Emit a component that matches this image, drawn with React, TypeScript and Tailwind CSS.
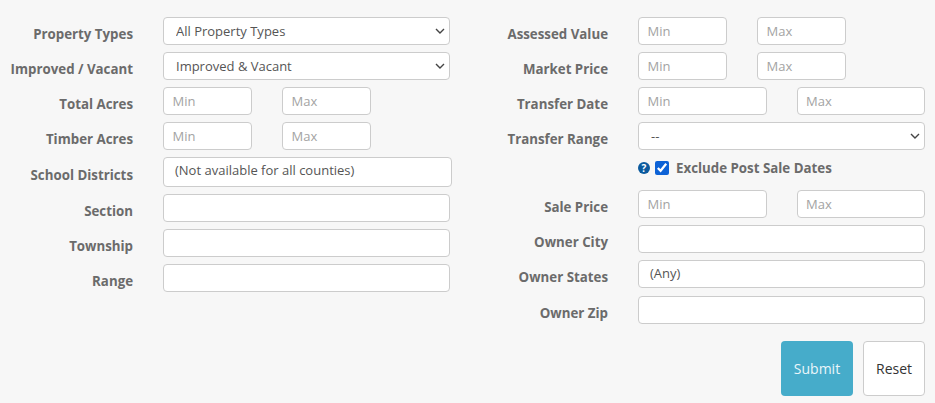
import React from "react";

const input = "h-7 rounded-[4px] border border-[#ccc] bg-white pl-[8.5px] pr-2 pb-[1px] text-[13px] text-[#555] placeholder:text-[#a3a3a3] outline-none";
const label = "font-bold text-[13.3px] text-[#6b6b6b] text-right";

function Row({ name, w, mt, children }: { name: string; w: string; mt?: string; children: React.ReactNode }) {
  return (
    <div className={`flex items-center ${mt ?? ""}`}>
      <div className={`${label} ${w} shrink-0 pt-[8px]`}>{name}</div>
      {children}
    </div>
  );
}

function Sel({ value }: { value: string }) {
  return (
    <div className="relative w-[287px] h-7">
      <select defaultValue={value} className="appearance-none h-7 w-full rounded-[4px] border border-[#ccc] bg-white pl-[12px] pt-[1px] text-[13px] text-[#555] outline-none">
        <option value={value}>{value}</option>
      </select>
      <svg className="absolute right-[5px] top-[11px] pointer-events-none" width="10" height="6" viewBox="0 0 10 6" fill="none" stroke="#444" strokeWidth="1.4"><path d="M1 1l4 4 4-4" /></svg>
    </div>
  );
}

function MinMax({ w, gap }: { w: string; gap: string }) {
  return (
    <div className={`flex ${gap}`}>
      <input className={`${input} ${w}`} placeholder="Min" readOnly />
      <input className={`${input} ${w}`} placeholder="Max" readOnly />
    </div>
  );
}

export default function App() {
  return (
    <div className="w-[935px] h-[403px] overflow-hidden bg-[#f7f7f7] flex font-['Open_Sans',sans-serif]">
      <div className="w-[470px] shrink-0 pt-[17px] flex flex-col gap-[7px]">
        <Row name="Property Types" w="w-[133px] mr-[30px]"><Sel value="All Property Types" /></Row>
        <Row name="Improved / Vacant" w="w-[133px] mr-[30px]"><Sel value="Improved & Vacant" /></Row>
        <Row name="Total Acres" w="w-[133px] mr-[30px]"><MinMax w="w-[89px]" gap="gap-[30px]" /></Row>
        <Row name="Timber Acres" w="w-[133px] mr-[30px]"><MinMax w="w-[89px]" gap="gap-[30px]" /></Row>
        <Row name="School Districts" w="w-[133px] mr-[30px]"><div className={`${input} w-[289px] h-[30px] flex items-center pl-[11px] pb-[3px] text-[#333]`}>(Not available for all counties)</div></Row>
        <Row name="Section" w="w-[133px] mr-[30px]"><input className={`${input} w-[287px]`} readOnly /></Row>
        <Row name="Township" w="w-[133px] mr-[30px]"><input className={`${input} w-[287px]`} readOnly /></Row>
        <Row name="Range" w="w-[133px] mr-[30px]"><input className={`${input} w-[287px]`} readOnly /></Row>
      </div>
      <div className="flex-1 pt-[17px] flex flex-col gap-[7px]">
        <Row name="Assessed Value" w="w-[138px] mr-[30px]"><MinMax w="w-[89px]" gap="gap-[30px]" /></Row>
        <Row name="Market Price" w="w-[138px] mr-[30px]"><MinMax w="w-[89px]" gap="gap-[30px]" /></Row>
        <Row name="Transfer Date" w="w-[138px] mr-[30px]"><MinMax w="w-[128.5px]" gap="gap-[30px]" /></Row>
        <Row name="Transfer Range" w="w-[138px] mr-[30px]"><Sel value="--" /></Row>
        <div className="flex items-start h-[26px] pl-[168px] gap-[5px]">
          <span className="mt-[5px] w-[12px] h-[12px] rounded-full bg-[#0b5a9e] text-white text-[10px] leading-[12px] font-bold flex items-center justify-center">?</span>
          <input type="checkbox" defaultChecked readOnly className="mt-[4px] w-[14px] h-[14px] accent-[#0d62d6]" />
          <span className="ml-[2px] mt-[2px] font-bold text-[13.3px] leading-[18px] text-[#6b6b6b]">Exclude Post Sale Dates</span>
        </div>
        <Row name="Sale Price" w="w-[138px] mr-[30px]"><MinMax w="w-[128.5px]" gap="gap-[30px]" /></Row>
        <Row name="Owner City" w="w-[138px] mr-[30px]"><input className={`${input} w-[287px]`} readOnly /></Row>
        <Row name="Owner States" w="w-[138px] mr-[30px]"><div className={`${input} w-[287px] flex items-center pl-[11px] pb-[0px] text-[#333]`}>(Any)</div></Row>
        <Row name="Owner Zip" w="w-[138px] mr-[30px]" mt="mt-[1px]"><input className={`${input} w-[287px]`} readOnly /></Row>
        <div className="flex justify-end gap-[10px] pr-[10px] mt-[10px]">
          <div className="w-[72px] h-[55px] rounded-[4px] bg-[#46acca] text-[#eaf6fa] text-[14px] flex items-center justify-center">Submit</div>
          <div className="w-[62px] h-[55px] rounded-[4px] bg-white border border-[#ccc] text-[#333] text-[14px] flex items-center justify-center">Reset</div>
        </div>
      </div>
    </div>
  );
}
